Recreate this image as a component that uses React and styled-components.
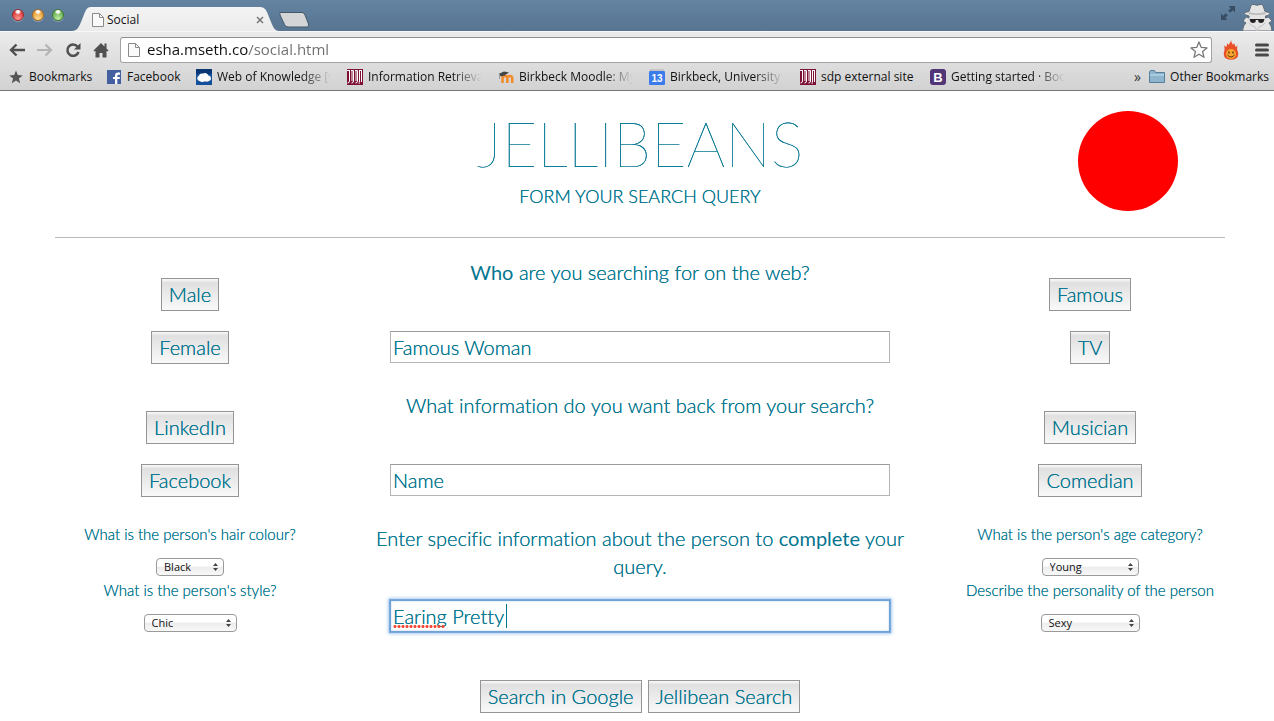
import React from 'react';
import styled, { createGlobalStyle, css } from 'styled-components';

const teal = '#047690';
const uiFont = '"Lucida Grande", "Open Sans", "Noto Sans", sans-serif';

/* firms up the hairline strokes of the light Lato weights */
const firm = css`text-shadow: 0 0 0 ${teal};`;

const GlobalStyle = createGlobalStyle`
  *, *::before, *::after { box-sizing: border-box; }
  body {
    margin: 0;
    background: #fff;
    color: ${teal};
    font-family: Lato, sans-serif;
    font-weight: 300;
    font-variant-ligatures: none;
    overflow: hidden;
  }
  h1, h2, p { margin: 0; font-weight: 300; }
`;

/* ---------- browser window ---------- */

const TitleBar = styled.header`
  display: flex;
  height: 31px;
  padding: 7px 0 0 12px;
  background: linear-gradient(#6484a2, #5c7a97 60%, #587591);
`;

const Lights = styled.div`
  display: flex;
  gap: 8px;
  padding-top: 2px;
`;

const Light = styled.button`
  width: 12px;
  height: 12px;
  padding: 0;
  border: 1px solid ${p => p.$edge};
  border-radius: 50%;
  background: radial-gradient(circle at 50% 15%, #fff 0 12%, transparent 35%),
    radial-gradient(circle at 50% 90%, ${p => p.$glow}, ${p => p.$fill} 70%);
  box-shadow: 0 1px 0 rgba(255, 255, 255, 0.3);
`;

const Tab = styled.div`
  display: flex;
  align-items: center;
  width: 207px;
  height: 24px;
  margin-left: 8px;
  padding: 1px 15px 0 20px;
  color: #111;
  font: 400 12px/16px ${uiFont};
  background: linear-gradient(#f4f4f4, #ebebeb);
  clip-path: path('M0 24 C5 24 7 20 9 15 L13 5 C15 1 16 0 20 0 L187 0 C191 0 193 1 195 5 L199 15 C201 20 203 24 207 24 Z');
  svg { flex: none; }
`;

const TabTitle = styled.span`
  flex: 1;
  padding-left: 3px;
`;

const IconButton = styled.button`
  display: flex;
  align-items: center;
  justify-content: center;
  flex: none;
  width: ${p => p.$width || 16}px;
  height: 16px;
  padding: 0;
  border: 0;
  background: none;
`;

const NewTab = styled.button`
  width: 32px;
  height: 16px;
  margin: 5px 0 0 -1px;
  padding: 0;
  border: 0;
  background: none;
  svg { display: block; }
`;

const TitleRight = styled.div`
  display: flex;
  align-items: flex-start;
  gap: 5px;
  margin: -4px 1px 0 auto;
  svg { display: block; }
`;

const FullScreen = styled.button`
  height: 16px;
  margin-top: 2px;
  padding: 0;
  border: 0;
  background: none;
`;

const Chrome = styled.nav`
  height: 60px;
  border-top: 1px solid #f8f8f8;
  border-bottom: 1px solid #777;
  background: linear-gradient(#ebebeb, #d2d2d2);
`;

const Toolbar = styled.div`
  display: flex;
  align-items: center;
  gap: 12px;
  height: 36px;
  padding: 0 4px 0 9px;
`;

const Omnibox = styled.label`
  display: flex;
  align-items: center;
  flex: 1;
  height: 26px;
  margin: 0 -4px 0 -1px;
  padding: 0 3px 0 7px;
  border: 1px solid #a2a2a2;
  border-top-color: #8f8f8f;
  border-radius: 3px;
  background: #fff;
`;

const Url = styled.input`
  flex: 1;
  min-width: 0;
  height: 22px;
  margin-left: 7px;
  padding: 0 0 2px;
  border: 0;
  outline: 0;
  color: #111;
  font: 400 15px/20px ${uiFont};
  background: linear-gradient(90deg, #111 101px, #6d6d6d 101px) text;
  -webkit-text-fill-color: transparent;
`;

const Bookmarks = styled.div`
  display: flex;
  align-items: center;
  height: 18px;
  padding: 0 5px 0 8px;
`;

const Bookmark = styled.a`
  display: flex;
  align-items: center;
  gap: 5px;
  flex: none;
  width: ${p => (p.$width ? p.$width + 'px' : 'auto')};
  padding-right: ${p => (p.$fade ? 16 : 0)}px;
  color: #111;
  font: 400 12px/16px ${uiFont};
  text-decoration: none;
  svg { flex: none; }
`;

const BookmarkText = styled.span`
  flex: 1;
  overflow: hidden;
  white-space: nowrap;
  ${p => p.$fade && css`mask-image: linear-gradient(90deg, #000 74%, transparent 100%);`}
`;

const Chevron = styled.button`
  margin: 0 8px 0 auto;
  padding: 0;
  border: 0;
  background: none;
  color: #333;
  font: 400 14px/16px ${uiFont};
`;

/* ---------- page ---------- */

const Page = styled.main`
  padding: 20px 49px 8px 55px;
  ${firm}
`;

const Grid = styled.div`
  display: grid;
  grid-template-columns: repeat(12, minmax(0, 1fr));
  column-gap: 30px;
`;

const Banner = styled(Grid)`
  height: 127px;
  border-bottom: 1px solid #b9b9b9;
`;

const Heading = styled.div`
  grid-column: 4 / span 6;
  text-align: center;
`;

const Title = styled.h1`
  margin-bottom: 5px;
  font-size: 61px;
  font-weight: 200;
  line-height: 66px;
`;

const Subtitle = styled.h2`
  font-size: 18px;
  line-height: 28px;
`;

const Disc = styled.div`
  grid-column: span 3;
  justify-self: end;
  width: 100px;
  height: 100px;
  margin-right: 47px;
  border-radius: 50%;
  background: #f00;
`;

const Form = styled.form`
  display: flex;
  flex-direction: column;
  gap: 27px;
  padding-top: 20px;
`;

const Side = styled.div`
  grid-column: span 3;
  display: flex;
  flex-direction: column;
  align-items: center;
`;

const ButtonStack = styled(Side)`
  gap: 20px;
  padding-top: 20px;
`;

const Middle = styled.div`
  grid-column: span 6;
  display: flex;
  flex-direction: column;
  align-items: center;
  justify-content: space-between;
  height: 105px;
  font-size: 20px;
  line-height: 28px;
  text-align: center;
  b { font-weight: 400; text-shadow: none; }
`;

const TallMiddle = styled(Middle)`
  height: 108px;
`;

const PushButton = styled.button`
  height: 33px;
  padding: 0 7px 2px;
  border: 1px solid #959595;
  border-radius: 0;
  color: ${teal};
  font: 300 20px/28px Lato, sans-serif;
  background: linear-gradient(#fbfbfb, #e0e0e0 12%, #f9f9f9);
  ${firm}
`;

const Field = styled.div`
  position: relative;
  width: 100%;
  max-width: 500px;
  height: 32px;
`;

const TextBox = styled.input`
  display: block;
  width: 100%;
  height: 32px;
  padding: 0 2px;
  border: 1px solid #b4b4b4;
  border-top-color: #9a9a9a;
  border-radius: 0;
  outline: 0;
  color: ${teal};
  font: 300 20px/28px Lato, sans-serif;
  font-variant-ligatures: none;
  ${firm}
  ${p => p.$active && css`
    border-color: #6fa3d6;
    box-shadow: 0 0 0 1px #79a9d8, 0 0 3px 2px #a9cbee, inset 0 0 2px #a9cbee;
  `}
`;

const Caret = styled.span`
  position: absolute;
  top: 4px;
  left: 116px;
  width: 1px;
  height: 24px;
  background: ${teal};
`;

const Misspelling = styled.span`
  position: absolute;
  top: 25px;
  left: 3px;
  width: 52px;
  height: 3px;
  background: radial-gradient(circle, #f2452b 1px, transparent 2px) 0 0 / 4px 3px;
`;

const Label = styled.label`
  font-size: 15px;
  line-height: 20px;
`;

const SelectWrap = styled.div`
  position: relative;
  width: ${p => p.$width}px;
  height: 18px;
  margin: 14px 0 4px;
  svg { position: absolute; top: 5px; right: 6px; pointer-events: none; }
`;

const Select = styled.select`
  appearance: none;
  display: block;
  width: 100%;
  height: 18px;
  padding: 0 16px 1px 7px;
  border: 1px solid #9a9a9a;
  border-radius: 4px;
  color: #111;
  font: 400 11px/15px ${uiFont};
  background: linear-gradient(#fff 45%, #ececec 50%, #f8f8f8);
`;

const Actions = styled.div`
  display: flex;
  justify-content: center;
  gap: 6px;
  margin-top: 17px;
`;

/* ---------- icons ---------- */

const PageIcon = () => (
  <svg width="12" height="14" viewBox="0 0 12 14">
    <path d="M1 .5H7.500L11.500 4.500V13.500H.5V.5Z" fill="#fafafa" stroke="#8a8a8a" />
    <path d="M7.500 .5V4.500H11.500" fill="none" stroke="#8a8a8a" />
  </svg>
);

const CrestIcon = () => (
  <svg width="16" height="16" viewBox="0 0 16 16">
    <path fill="#7d1033" d="M0 0h16v16H0z" />
    <path fill="none" stroke="#fff" d="M0 1.500H3M2.500 1V12Q2.500 14 .5 14M4 1.500H6.500V12Q6.500 14 4.500 14M5 1V12M8 1.500H10.500V12Q10.500 14 8.500 14M9 2V12M12 1.500H15M14.500 1V13M12.500 2V13M11.500 14H13" />
  </svg>
);

const bookmarkIcons = {
  star: (
    <svg width="16" height="16" viewBox="0 0 16 16">
      <path fill="#555" d="M8 1.500 9.800 6.100 14.800 6.400 10.900 9.500 12.200 14.300 8 11.600 3.800 14.300 5.100 9.500 1.200 6.400 6.200 6.100Z" />
    </svg>
  ),
  facebook: (
    <svg width="16" height="16" viewBox="0 0 16 16">
      <path fill="#4560a0" d="M1 1h14v14H1z" />
      <path fill="#fff" d="M9 15V10H7V8H9V6.500Q9 3.500 12 3.500H14V5.700H12.500Q11.300 5.700 11.300 7V8H14L13.600 10H11.300V15Z" />
    </svg>
  ),
  cloud: (
    <svg width="16" height="16" viewBox="0 0 16 16">
      <path fill="#15509a" d="M0 0h16v16H0z" />
      <path fill="#0b3775" d="M0 0h16v5H0z" />
      <path fill="#fff" d="M3.500 12A2.700 2.700 0 0 1 3 6.800 3 3 0 0 1 7 4.600 3.500 3.500 0 0 1 12.400 6.500 2.800 2.800 0 0 1 13 12Q10.500 13.200 9 12.300 6 13.600 3.500 12Z" />
    </svg>
  ),
  crest: <CrestIcon />,
  moodle: (
    <svg width="16" height="16" viewBox="0 0 16 16">
      <path fill="none" stroke="#f28b2c" strokeWidth="2.600" d="M4.500 14V9.500Q4.500 7 7 7T9.300 9.500V14M9.300 9.500Q9.300 7 11.800 7T14.200 9.500V14" />
      <path fill="#444" d="M.5 5 6 2.500 11 3.500 6.500 6.500 3 7.500Z" />
      <path stroke="#999" d="M1.500 5V10" />
    </svg>
  ),
  calendar: (
    <svg width="16" height="16" viewBox="0 0 16 16">
      <path fill="#c4c4c4" d="M1 0h14v3H1z" />
      <rect y="2" width="16" height="14" rx="1" fill="#3b7ced" />
      <text x="8" y="13" fill="#fff" fontFamily="Liberation Sans, sans-serif" fontSize="10" fontWeight="700" textAnchor="middle">13</text>
    </svg>
  ),
  bootstrap: (
    <svg width="16" height="16" viewBox="0 0 16 16">
      <rect width="16" height="16" rx="3" fill="#513577" />
      <text x="8" y="13" fill="#fff" fontFamily="Liberation Sans, sans-serif" fontSize="13" fontWeight="700" textAnchor="middle">B</text>
    </svg>
  ),
  folder: (
    <svg width="16" height="16" viewBox="0 0 16 16">
      <path fill="#8fb4cd" stroke="#577f9c" d="M.5 13.500V3L1.500 1.500H5.500L6.500 3.500H15.500V13.500Z" />
      <path fill="#a9cbe0" d="M1 5h14v2H1z" />
    </svg>
  ),
};

const UpDown = () => (
  <svg width="5" height="8" viewBox="0 0 5 8">
    <path fill="#444" d="M2.500 0 5 3H0ZM2.500 8 0 5H5Z" />
  </svg>
);

const Incognito = () => (
  <svg width="32" height="28" viewBox="0 0 32 28">
    <path fill="#e4e4e4" stroke="#5f6a75" d="M1.500 28Q2 22 5 20L2 18 5 14 8 15V13Q3 11.500 3 10.500 4 9 8 8.500L10 2.500Q11 1 13 1.500 16 3 19 1.500 21 1 22 2.500L24 8.500Q29 9.500 29 10.500 28 12.500 24.500 13V15L27.500 14 31 18 28 20Q30.500 22 31 28Z" />
    <path fill="#bcbcbc" d="M8 9Q16 11.500 24 9L24.500 11Q16 13 7.500 11Z" />
    <path fill="#222" d="M8.500 16H15L14.500 19Q12 21 9.500 19ZM17 16H23.500L22.500 19Q20 21 17.500 19ZM14 16h4v1h-4z" />
    <path fill="none" stroke="#c2c2c2" d="M8 20Q10 23 14 24L16 28 18 24Q22 23 24 20" />
  </svg>
);

/* ---------- data ---------- */

const bookmarks = [
  { text: 'Bookmarks', icon: 'star', width: 98 },
  { text: 'Facebook', icon: 'facebook', width: 90 },
  { text: 'Web of Knowledge [v', icon: 'cloud', width: 151, fade: true },
  { text: 'Information Retrieval', icon: 'crest', width: 151, fade: true },
  { text: 'Birkbeck Moodle: My', icon: 'moodle', width: 151, fade: true },
  { text: 'Birkbeck, University o', icon: 'calendar', width: 151, fade: true },
  { text: 'sdp external site', icon: 'crest', width: 130 },
  { text: 'Getting started · Boo', icon: 'bootstrap', width: 151, fade: true },
];

const Choice = ({ id, label, value, width }) => (
  <>
    <Label htmlFor={id}>{label}</Label>
    <SelectWrap $width={width}>
      <Select id={id} defaultValue={value}>
        <option>{value}</option>
      </Select>
      <UpDown />
    </SelectWrap>
  </>
);

const Buttons = ({ names }) => (
  <ButtonStack>
    {names.map(n => <PushButton type="button" key={n}>{n}</PushButton>)}
  </ButtonStack>
);

function BrowserBar() {
  return (
    <>
      <TitleBar>
        <Lights>
          <Light aria-label="Close window" $edge="#9c2c2c" $fill="#dc3a3c" $glow="#ff9a94" />
          <Light aria-label="Minimise window" $edge="#a56a24" $fill="#e99b39" $glow="#ffdf8f" />
          <Light aria-label="Zoom window" $edge="#3f7a33" $fill="#66ae52" $glow="#c4f0a4" />
        </Lights>
        <Tab>
          <PageIcon />
          <TabTitle>Social</TabTitle>
          <IconButton aria-label="Close tab" $width={8}>
            <svg width="8" height="8" viewBox="0 0 8 8"><path stroke="#777" strokeWidth="1.500" d="M1 1 7 7M7 1 1 7" /></svg>
          </IconButton>
        </Tab>
        <NewTab aria-label="New tab">
          <svg width="32" height="16" viewBox="0 0 32 16">
            <path fill="#d3d5d7" stroke="#42586d" d="M3 .5H24Q26 .5 27 3L30.500 12Q31.500 15 29 15H10Q7.500 15 6.500 12.500L2 3Q1 .5 3 .5Z" />
          </svg>
        </NewTab>
        <TitleRight>
          <FullScreen aria-label="Full screen">
            <svg width="16" height="16" viewBox="0 0 16 16">
              <path fill="#374d63" d="M8.500 1H15V7.500L12.800 5.300 10.300 7.800 8.200 5.700 10.700 3.200ZM1 8.500 3.200 10.700 5.700 8.200 7.800 10.300 5.300 12.800 7.500 15H1Z" />
            </svg>
          </FullScreen>
          <Incognito />
        </TitleRight>
      </TitleBar>
      <Chrome>
        <Toolbar>
          <IconButton aria-label="Back">
            <svg width="16" height="14" viewBox="0 0 16 14"><path fill="none" stroke="#505050" strokeWidth="2.400" d="M7.500 1.500 2 7 7.500 12.500M2 7H16" /></svg>
          </IconButton>
          <IconButton aria-label="Forward">
            <svg width="16" height="14" viewBox="0 0 16 14"><path fill="none" stroke="#b4b4b4" strokeWidth="2.200" d="M8.500 1.500 14 7 8.500 12.500M14 7H0" /></svg>
          </IconButton>
          <IconButton aria-label="Reload">
            <svg width="16" height="16" viewBox="0 0 16 16">
              <path fill="none" stroke="#505050" strokeWidth="2.500" d="M12.500 4.500A5.700 5.700 0 1 0 13.500 10" />
              <path fill="#505050" d="M15.500 1V7.500H9Z" />
            </svg>
          </IconButton>
          <IconButton aria-label="Home">
            <svg width="16" height="16" viewBox="0 0 16 16">
              <path fill="#505050" d="M8 1 11.500 4.500V1.500H13.500V6.500L15.500 8.500 14.500 9.500 13.500 8.700V15.500H9.500V11H6.500V15.500H2.500V8.700L1.500 9.500 .5 8.500Z" />
            </svg>
          </IconButton>
          <Omnibox>
            <PageIcon />
            <Url aria-label="Address" defaultValue="esha.mseth.co/social.html" spellCheck={false} />
            <svg width="18" height="18" viewBox="0 0 18 18">
              <path fill="#fff" stroke="#777" strokeWidth="1.300" strokeLinejoin="round" d="M9 1 11.200 6.300 17 6.900 12.600 10.600 14 16.300 9 13.200 4 16.300 5.400 10.600 1 6.900 6.800 6.300Z" />
            </svg>
          </Omnibox>
          <IconButton aria-label="Flame extension" $width={22}>
            <svg width="16" height="20" viewBox="0 0 16 20">
              <path fill="#e9502a" d="M8 0Q8 2 10 5L11 3Q12 5 12.500 7L14.500 5.500Q13.500 9 15 12 16 16 13 18.500 8 21 3 18.500 0 16 1 12 2.200 9 1 5.500L3.500 7Q4 5 4 3L5.500 5Q8 2 8 0Z" />
              <circle cx="8" cy="14" r="5" fill="#f8a52f" />
              <path stroke="#5a2b10" strokeWidth="1.300" d="M6 11.500V13.500M10 11.500V13.500" />
              <path fill="none" stroke="#5a2b10" d="M4.500 15Q8 19 11.500 15" />
            </svg>
          </IconButton>
          <IconButton aria-label="Menu">
            <svg width="14" height="14" viewBox="0 0 14 14"><path stroke="#484848" strokeWidth="3" strokeLinecap="round" d="M1.500 2H12.500M1.500 7H12.500M1.500 12H12.500" /></svg>
          </IconButton>
        </Toolbar>
        <Bookmarks>
          {bookmarks.map(b => (
            <Bookmark href="#" key={b.text} $width={b.width} $fade={b.fade}>
              {bookmarkIcons[b.icon]}
              <BookmarkText $fade={b.fade}>{b.text}</BookmarkText>
            </Bookmark>
          ))}
          <Chevron aria-label="More bookmarks">»</Chevron>
          <Bookmark href="#">
            {bookmarkIcons.folder}
            <BookmarkText>Other Bookmarks</BookmarkText>
          </Bookmark>
        </Bookmarks>
      </Chrome>
    </>
  );
}

export default function App() {
  return (
    <>
      <GlobalStyle />
      <BrowserBar />
      <Page>
        <Banner>
          <Heading>
            <Title>JELLIBEANS</Title>
            <Subtitle>FORM YOUR SEARCH QUERY</Subtitle>
          </Heading>
          <Disc />
        </Banner>
        <Form>
          <Grid>
            <Buttons names={['Male', 'Female']} />
            <Middle>
              <label htmlFor="who"><b>Who</b> are you searching for on the web?</label>
              <Field><TextBox id="who" defaultValue="Famous Woman" /></Field>
            </Middle>
            <Buttons names={['Famous', 'TV']} />
          </Grid>
          <Grid>
            <Buttons names={['LinkedIn', 'Facebook']} />
            <Middle>
              <label htmlFor="what">What information do you want back from your search?</label>
              <Field><TextBox id="what" defaultValue="Name" /></Field>
            </Middle>
            <Buttons names={['Musician', 'Comedian']} />
          </Grid>
          <Grid>
            <Side>
              <Choice id="hair" label="What is the person's hair colour?" value="Black" width={68} />
              <Choice id="style" label="What is the person's style?" value="Chic" width={93} />
            </Side>
            <TallMiddle>
              <label htmlFor="detail">Enter specific information about the person to <b>complete</b> your query.</label>
              <Field>
                <TextBox id="detail" defaultValue="Earing Pretty" $active />
                <Misspelling />
                <Caret />
              </Field>
            </TallMiddle>
            <Side>
              <Choice id="age" label="What is the person's age category?" value="Young" width={97} />
              <Choice id="personality" label="Describe the personality of the person" value="Sexy" width={99} />
            </Side>
          </Grid>
          <Actions>
            <PushButton type="button">Search in Google</PushButton>
            <PushButton type="button">Jellibean Search</PushButton>
          </Actions>
        </Form>
      </Page>
    </>
  );
}
